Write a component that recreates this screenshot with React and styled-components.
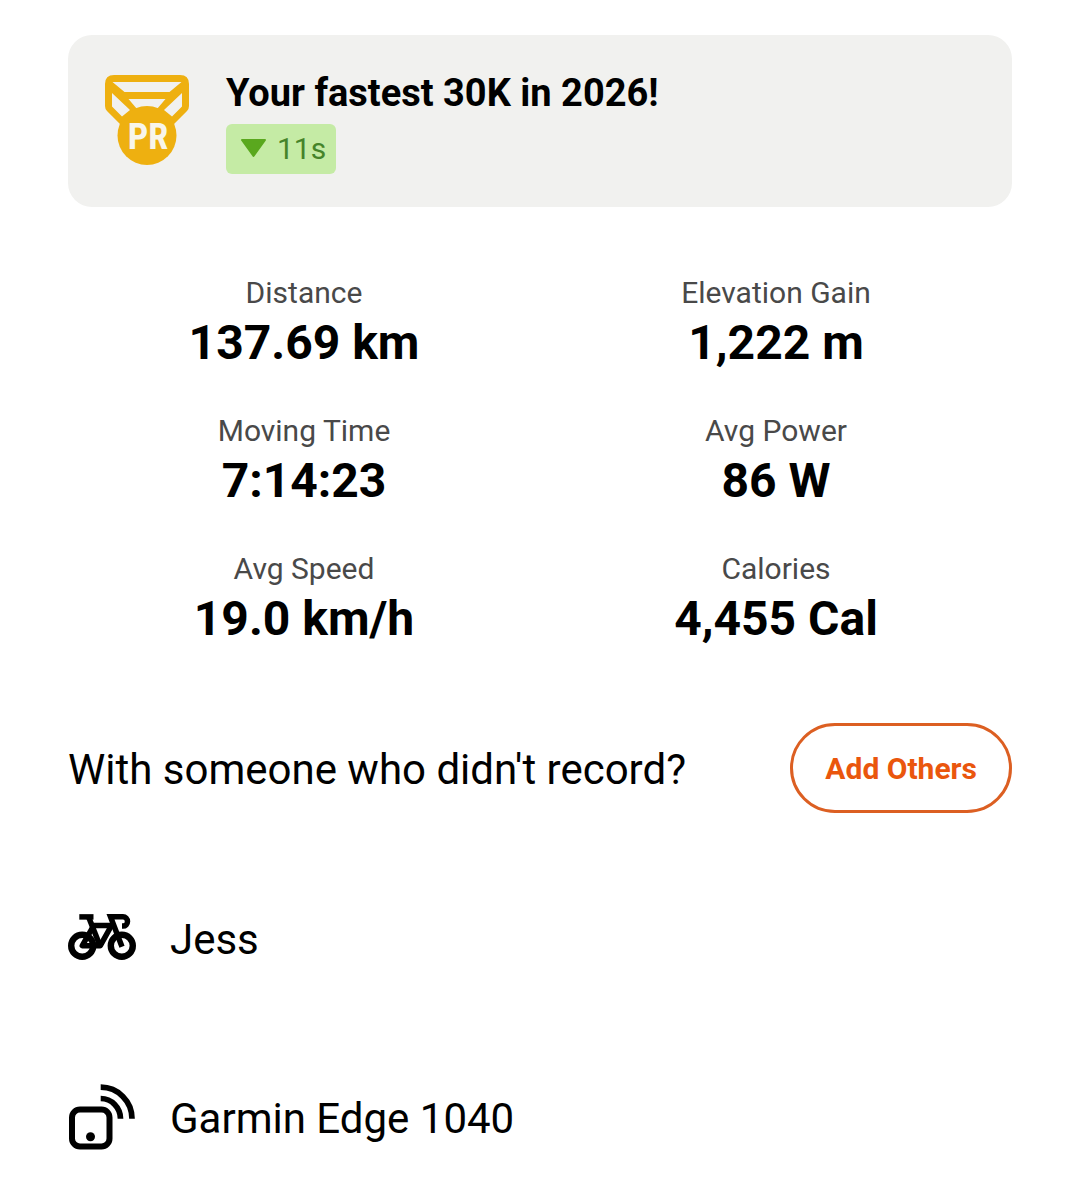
import React from "react";
import styled, { createGlobalStyle } from "styled-components";

const GlobalStyle = createGlobalStyle`
  * {
    box-sizing: border-box;
  }
  body {
    margin: 0;
    background-color: #ffffff;
    color: #000000;
    font-family: Roboto, "Liberation Sans", sans-serif;
  }
`;

const Page = styled.main`
  padding: 35px 68px 31px;
`;

const Card = styled.section`
  display: flex;
  align-items: center;
  gap: 36px;
  padding: 33px 36px;
  border-radius: 24px;
  background-color: #f1f1ef;
`;

const CardText = styled.div`
  display: flex;
  flex-direction: column;
  align-items: flex-start;
  gap: 6px;
`;

const CardTitle = styled.h1`
  margin: 0;
  font-size: 38px;
  line-height: 50px;
  font-weight: 700;
`;

const Badge = styled.span`
  display: flex;
  align-items: center;
  gap: 10px;
  padding: 0 10px 0 14px;
  border-radius: 6px;
  background-color: #c5eba5;
  color: #45842a;
  font-size: 30px;
  line-height: 50px;
`;

const Stats = styled.dl`
  display: grid;
  grid-template-columns: 1fr 1fr;
  row-gap: 38px;
  margin: 66px 0 74px;
  text-align: center;
`;

const StatLabel = styled.dt`
  color: #494949;
  font-size: 30px;
  line-height: 40px;
`;

const StatValue = styled.dd`
  margin: 0;
  font-size: 48px;
  line-height: 60px;
  font-weight: 700;
`;

const OthersRow = styled.section`
  display: flex;
  align-items: center;
  justify-content: space-between;
  margin-bottom: 91px;
`;

const Text = styled.p`
  margin: 0;
  padding-top: 4px;
  font-size: 42px;
  line-height: 60px;
`;

const OutlineButton = styled.button`
  height: 90px;
  padding: 0 32px;
  border: 3px solid #dc5f22;
  border-radius: 45px;
  background-color: #ffffff;
  color: #ea560d;
  font-family: inherit;
  font-size: 30px;
  font-weight: 700;
  cursor: pointer;
`;

const GearList = styled.ul`
  display: flex;
  flex-direction: column;
  gap: 111px;
  margin: 0;
  padding: 0;
  list-style: none;
`;

const GearItem = styled.li`
  display: flex;
  align-items: center;
  gap: 34px;
`;

const MedalText = styled.text`
  fill: #f8f5ea;
  font-family: "Roboto Condensed", "Liberation Sans Narrow", Roboto, sans-serif;
  font-size: 36px;
  font-weight: 700;
  text-anchor: middle;
`;

const stats = [
  { label: "Distance", value: "137.69 km" },
  { label: "Elevation Gain", value: "1,222 m" },
  { label: "Moving Time", value: "7:14:23" },
  { label: "Avg Power", value: "86 W" },
  { label: "Avg Speed", value: "19.0 km/h" },
  { label: "Calories", value: "4,455 Cal" },
];

function MedalIcon() {
  return (
    <svg width="86" height="98" viewBox="0 0 86 98" aria-label="PR">
      <path
        fill="#eeb010"
        fillRule="evenodd"
        d="M10 3H76Q85 3 85 12V34Q85 37 83 39L68 54H18L3 39Q1 37 1 34V12Q1 3 10 3Z
          M8.500 10L20.500 20H65.500L77.500 10Z
          M8 21V34.500L18 44.500L26 38Z
          M78 21V34.500L68 44.500L60 38Z
          M24.500 27L33 37H53L61.500 27Z"
      />
      <circle cx="43" cy="63.500" r="29.500" fill="#eeb010" />
      <MedalText x="44" y="77">
        PR
      </MedalText>
    </svg>
  );
}

function DownIcon() {
  return (
    <svg width="27" height="22" viewBox="0 0 27 22" aria-hidden="true">
      <path
        d="M2 2H25L13.500 18Z"
        fill="#5aa81e"
        stroke="#5aa81e"
        strokeWidth="2"
        strokeLinejoin="round"
      />
    </svg>
  );
}

function BikeIcon() {
  return (
    <svg
      width="68"
      height="68"
      viewBox="0 0 68 68"
      fill="none"
      stroke="#000"
      strokeWidth="5.500"
      aria-hidden="true"
    >
      <circle cx="14.200" cy="41.700" r="11" strokeWidth="6.400" />
      <circle cx="53.800" cy="41.700" r="11" strokeWidth="6.400" />
      <path d="M11.300 12.900H25.500" />
      <path d="M20.500 12.700L32 41.700" />
      <path d="M14.300 41.700H32.300L43.500 21.500H25.700Z" strokeLinejoin="round" />
      <path d="M54 42.700L42.500 12.700H55A4.500 4.700 0 0 1 55 22.100H54" />
    </svg>
  );
}

function DeviceIcon() {
  return (
    <svg
      width="68"
      height="68"
      viewBox="0 0 68 68"
      fill="none"
      stroke="#000"
      strokeWidth="5.700"
      aria-hidden="true"
    >
      <rect x="4" y="26.500" width="37.500" height="37" rx="8" strokeWidth="6" />
      <circle cx="22.500" cy="53.700" r="4.500" fill="#000" stroke="none" />
      <path d="M32.700 15.500A19.800 20.200 0 0 1 52.500 35.700" />
      <path d="M32.700 4.200A31.300 31.500 0 0 1 64 35.700" />
    </svg>
  );
}

export default function App() {
  return (
    <>
      <GlobalStyle />
      <Page>
        <Card>
          <MedalIcon />
          <CardText>
            <CardTitle>Your fastest 30K in 2026!</CardTitle>
            <Badge>
              <DownIcon />
              11s
            </Badge>
          </CardText>
        </Card>

        <Stats>
          {stats.map((stat) => (
            <div key={stat.label}>
              <StatLabel>{stat.label}</StatLabel>
              <StatValue>{stat.value}</StatValue>
            </div>
          ))}
        </Stats>

        <OthersRow>
          <Text>With someone who didn't record?</Text>
          <OutlineButton type="button">Add Others</OutlineButton>
        </OthersRow>

        <GearList>
          <GearItem>
            <BikeIcon />
            <Text>Jess</Text>
          </GearItem>
          <GearItem>
            <DeviceIcon />
            <Text>Garmin Edge 1040</Text>
          </GearItem>
        </GearList>
      </Page>
    </>
  );
}
